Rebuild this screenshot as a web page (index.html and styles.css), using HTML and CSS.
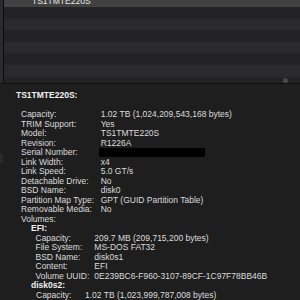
FILE: index.html
```html
<!DOCTYPE html>
<html lang="en">
<head>
    <meta charset="UTF-8">
    <title>System Information - NVMExpress</title>
    <link rel="stylesheet" href="styles.css">
</head>
<body>

<div class="top">
    <div class="sidebar"></div>
    <div class="list">
        <div class="row selected"><span class="row-text">TS1TMTE220S</span></div>
        <div class="row"></div>
        <div class="row alt"></div>
        <div class="row"></div>
        <div class="row alt"></div>
        <div class="row"></div>
        <div class="row alt"></div>
        <div class="row"></div>
        <div class="knob"></div>
    </div>
</div>

<div class="details">
    <div class="title">TS1TMTE220S:</div>

    <div class="props">
        <span>Capacity:</span><span>1.02 TB (1,024,209,543,168 bytes)</span>
        <span>TRIM Support:</span><span>Yes</span>
        <span>Model:</span><span>TS1TMTE220S</span>
        <span>Revision:</span><span>R1226A</span>
        <span>Serial Number:</span><span><i class="redacted"></i></span>
        <span>Link Width:</span><span>x4</span>
        <span>Link Speed:</span><span>5.0 GT/s</span>
        <span>Detachable Drive:</span><span>No</span>
        <span>BSD Name:</span><span>disk0</span>
        <span>Partition Map Type:</span><span>GPT (GUID Partition Table)</span>
        <span>Removable Media:</span><span>No</span>
    </div>
    <div class="group-label">Volumes:</div>

    <div class="volume">
        <div class="vol-name">EFI:</div>
        <div class="props efi">
            <span>Capacity:</span><span>209.7 MB (209,715,200 bytes)</span>
            <span>File System:</span><span>MS-DOS FAT32</span>
            <span>BSD Name:</span><span>disk0s1</span>
            <span>Content:</span><span>EFI</span>
            <span>Volume UUID:</span><span>0E239BC6-F960-3107-89CF-1C97F78BB46B</span>
        </div>
        <div class="vol-name">disk0s2:</div>
        <div class="props disk">
            <span>Capacity:</span><span>1.02 TB (1,023,999,787,008 bytes)</span>
        </div>
    </div>
</div>

<div class="edge-handle"></div>

</body>
</html>
```

FILE: styles.css
```css
body { margin: 0; background: #1e1e1e; font-family: "Liberation Sans", Arial, sans-serif; font-size: 8.5px; color: #dcdcdc; overflow: hidden; }

/* Liste du haut */
.top { display: flex; height: 83px; border-bottom: 1px solid #0f0f0f; overflow: hidden; }
.sidebar { width: 3px; background: #2b2b2b; border-right: 1px solid #0c0c0c; flex-shrink: 0; }
.list { position: relative; flex-grow: 1; }
.row { height: 11.6px; background: #232325; }
.row.alt { background: #2b2b2d; }
.row.selected { height: 7px; background: #414141; position: relative; overflow: hidden; }
.row-text { position: absolute; left: 28px; bottom: 0.5px; line-height: 9.5px; color: #e6e6e6; }
.knob { position: absolute; left: 278.5px; top: 77.7px; width: 5px; height: 5px; border-radius: 50%; background: #4b4b4b; }

/* Détails */
.details { padding: 7.3px 0 0 16px; line-height: 9.5px; }
.title { font-weight: bold; color: #f2f2f2; margin-bottom: 9.5px; }
.props { display: grid; grid-template-columns: 79.7px auto; padding-left: 5px; white-space: nowrap; }
.group-label { padding-left: 5px; }
.redacted { display: inline-block; width: 106px; height: 8.3px; background: #000; margin-left: -1.7px; vertical-align: -1.4px; }

.volume { padding-left: 15px; }
.vol-name { font-weight: bold; color: #f0f0f0; }
.props.efi { padding-left: 4.5px; grid-template-columns: 58.8px auto; }
.props.disk { padding-left: 5px; grid-template-columns: 49px auto; }

.edge-handle { position: absolute; left: 0; top: 154px; width: 3px; height: 9px; background: #2a2a2a; }
```
